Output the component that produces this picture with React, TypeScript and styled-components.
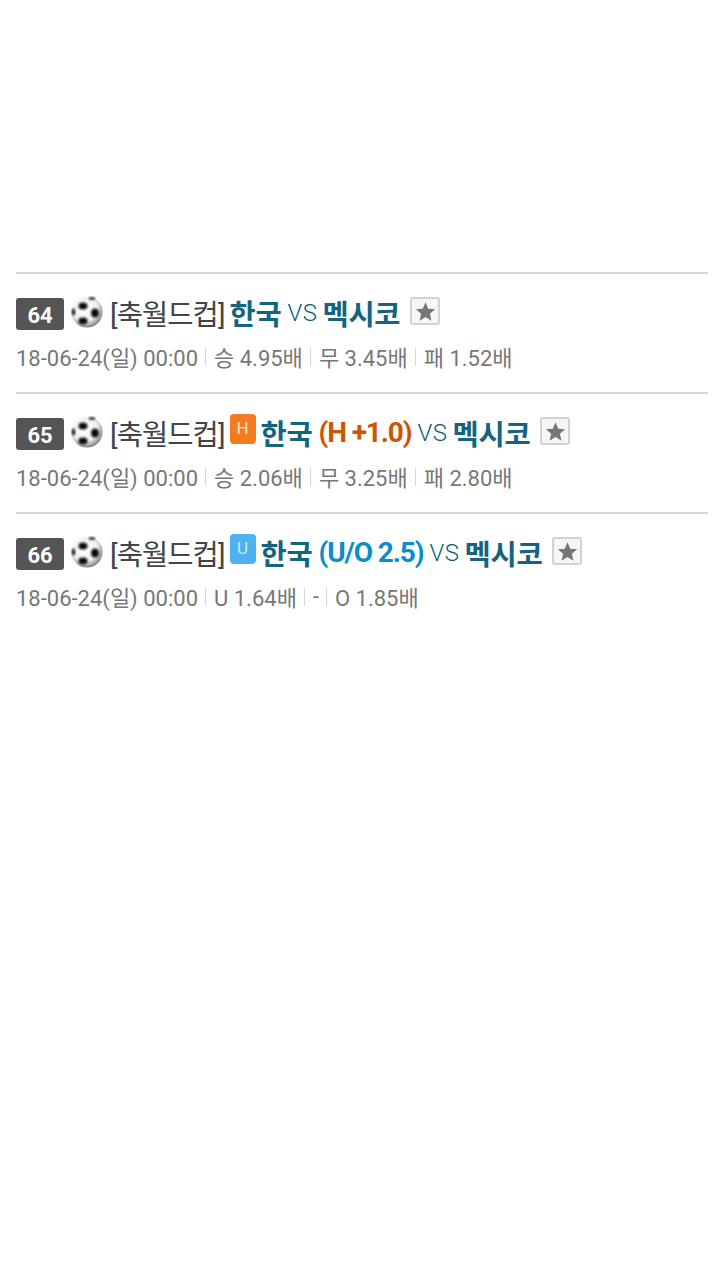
import React from 'react';
import styled, { createGlobalStyle } from 'styled-components';

type Market = 'H' | 'U';

interface Game {
  no: number;
  market?: Market;
  line?: string;
  odds: string[];
}

const games: Game[] = [
  { no: 64, odds: ['승 4.95배', '무 3.45배', '패 1.52배'] },
  { no: 65, market: 'H', line: '(H +1.0)', odds: ['승 2.06배', '무 3.25배', '패 2.80배'] },
  { no: 66, market: 'U', line: '(U/O 2.5)', odds: ['U 1.64배', '-', 'O 1.85배'] },
];

function SoccerBall() {
  return (
    <BallIcon viewBox="0 0 32 32">
      <defs>
        <radialGradient id="ball" cx="42%" cy="38%" r="68%">
          <stop offset="0%" stopColor="#ffffff" />
          <stop offset="62%" stopColor="#f0f0f0" />
          <stop offset="100%" stopColor="#666666" />
        </radialGradient>
        <filter id="soft">
          <feGaussianBlur stdDeviation="1" />
        </filter>
      </defs>
      <circle cx="16" cy="16" r="15.5" fill="url(#ball)" />
      <g fill="#111111" filter="url(#soft)">
        <ellipse cx="12" cy="10" rx="4.500" ry="3.600" />
        <ellipse cx="24" cy="17" rx="4" ry="4.600" />
        <ellipse cx="12" cy="25" rx="4.600" ry="3.400" />
        <ellipse cx="2.500" cy="16" rx="1.600" ry="3.600" />
        <ellipse cx="21" cy="2.500" rx="3.200" ry="1.200" />
      </g>
    </BallIcon>
  );
}

function FavoriteButton() {
  return (
    <StarBox>
      <svg viewBox="0 0 24 24" width="21" height="21">
        <path d="M12 1.500l3.100 7.300 7.900.7-6 5.200 1.800 7.800L12 18.300 5.200 22.500 7 14.700l-6-5.200 7.900-.7z" fill="#767676" />
      </svg>
    </StarBox>
  );
}

export default function App() {
  return (
    <>
      <GlobalStyle />
      <Page>
        <GameList>
          {games.map((game) => (
            <GameRow key={game.no}>
              <TitleLine>
                <NumberBadge>{game.no}</NumberBadge>
                <SoccerBall />
                <League>[축월드컵]</League>
                {game.market && <MarketBadge $market={game.market}>{game.market}</MarketBadge>}
                <Team>한국</Team>
                {game.market && game.line && <LineText $market={game.market}>{game.line}</LineText>}
                <Versus>VS</Versus>
                <Team>멕시코</Team>
                <FavoriteButton />
              </TitleLine>
              <MetaLine>
                <span>18-06-24(일) 00:00</span>
                {game.odds.map((odd) => (
                  <React.Fragment key={odd}>
                    <Divider />
                    <span>{odd}</span>
                  </React.Fragment>
                ))}
              </MetaLine>
            </GameRow>
          ))}
        </GameList>
      </Page>
    </>
  );
}

const GlobalStyle = createGlobalStyle`
  html, body {
    margin: 0;
    padding: 0;
    background: #ffffff;
  }
  body {
    font-family: Roboto, "Noto Sans CJK KR", sans-serif;
  }
`;

const Page = styled.div`
  width: 720px;
  height: 1280px;
  padding: 272px 12px 0 16px;
  box-sizing: border-box;
  overflow: hidden;
`;

const GameList = styled.div`
  display: flex;
  flex-direction: column;
`;

const GameRow = styled.div`
  height: 120px;
  box-sizing: border-box;
  border-top: 2px solid #d6d6d6;
  padding-top: 20px;
`;

const TitleLine = styled.div`
  display: flex;
  align-items: center;
  height: 36px;
  font-size: 28.5px;
`;

const NumberBadge = styled.span`
  width: 48px;
  height: 32px;
  margin-top: 4px;
  border-radius: 3px;
  background: #555555;
  color: #ffffff;
  font-size: 22px;
  font-weight: 700;
  line-height: 36px;
  text-align: center;
`;

const BallIcon = styled.svg`
  width: 32px;
  height: 32px;
  margin: 0 0 0 7px;
`;

const League = styled.span`
  margin-left: 7px;
  color: #444444;
  letter-spacing: -0.9px;
`;

const MarketBadge = styled.span<{ $market: Market }>`
  width: 26px;
  height: 30px;
  margin: -6px 0 0 5px;
  border-radius: 4px;
  background: ${(p) => (p.$market === 'H' ? '#f57a20' : '#4db2ef')};
  color: ${(p) => (p.$market === 'H' ? '#ffe0c8' : '#cfeafb')};
  font-size: 17px;
  line-height: 28px;
  text-align: center;
`;

const Team = styled.span`
  margin-left: 5px;
  color: #13647f;
  font-weight: 700;
  letter-spacing: -0.3px;
`;

const LineText = styled.span<{ $market: Market }>`
  margin-left: 6px;
  color: ${(p) => (p.$market === 'H' ? '#cc5500' : '#0d8ccb')};
  font-weight: 700;
  font-size: 28px;
  letter-spacing: -1.1px;
`;

const Versus = styled.span`
  margin: 2px 0 0 6px;
  color: #0f5f7a;
  font-size: 24px;
  font-weight: 300;
  letter-spacing: 0.5px;
`;

const StarBox = styled.span`
  display: flex;
  align-items: center;
  justify-content: center;
  width: 26px;
  height: 24px;
  margin: -2px 0 0 10px;
  border: 2px solid #d2d2d2;
  border-radius: 3px;
  background: #f6f6f6;
`;

const MetaLine = styled.div`
  display: flex;
  align-items: center;
  height: 30px;
  margin-top: 11px;
  color: #777777;
  font-size: 22px;
`;

const Divider = styled.i`
  width: 1px;
  height: 18px;
  margin: 1px 8px 0 7px;
  background: #d6d6d6;
`;
